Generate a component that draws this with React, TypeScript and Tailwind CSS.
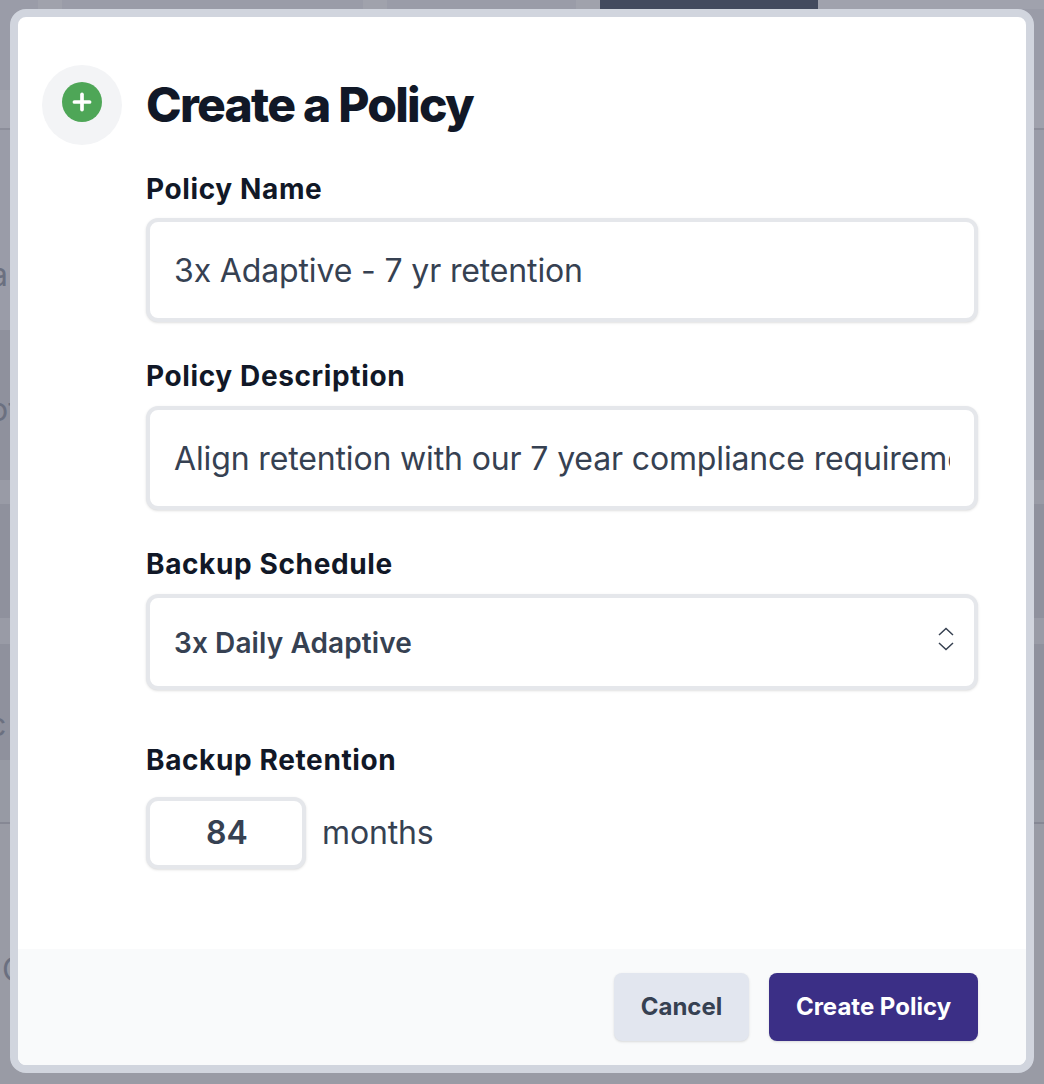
import { Plus } from 'lucide-react';

const inter = "font-['Inter',sans-serif] [font-optical-sizing:none]";

function Field({ label, children, className }: { label: string; children: React.ReactNode; className: string }) {
  return (
    <div className={className}>
      <div className="text-[28px] leading-[36px] font-bold tracking-[0.62px] text-[#111827]">{label}</div>
      {children}
    </div>
  );
}

const inputBox = 'flex items-center overflow-hidden rounded-xl border-4 border-[#e5e7eb] bg-white pt-[2px] shadow-sm';

function Chevrons() {
  return (
    <svg className="-mt-[8px]" width="16" height="24" viewBox="0 0 16 24" fill="none" stroke="#374151" strokeWidth="1.5">
      <path d="M1 8 L8 1.5 L15 8" />
      <path d="M1 16 L8 22.5 L15 16" />
    </svg>
  );
}

export default function App() {
  return (
    <div className={`relative h-[1084px] w-[1044px] overflow-hidden ${inter}`}>
      {/* dimmed page behind the modal */}
      <div className="flex h-full flex-col bg-[#9a9ca8] text-[32px] text-[#6b7080]">
        <div className="flex h-[90px] items-start bg-[#9a9ca8]">
          <div className="ml-[38px] h-[9px] w-[24px] bg-[#a0a2ac]" />
          <div className="ml-[301px] h-[9px] w-[24px] bg-[#a0a2ac]" />
          <div className="ml-[189px] h-[9px] w-[24px] bg-[#a0a2ac]" />
          <div className="h-[9px] w-[218px] bg-[#434a5e]" />
          <div className="h-[9px] flex-1 bg-[#a0a2ad]" />
        </div>
        <div className="h-[40px] border-b-2 border-[#8c8e9a] bg-[#9fa1ac]" />
        <div className="h-[200px] pt-[125px]">
          <span className="-ml-[10px] block leading-[40px]">a</span>
        </div>
        <div className="h-[150px] bg-[#8f919d] pt-[60px]">
          <span className="-ml-[11px] block leading-[40px]">ot</span>
        </div>
        <div className="h-[24px] bg-[#999ba6]" />
        <div className="h-[114px] bg-[#8f919d]" />
        <div className="h-[26px] bg-[#999ba6]" />
        <div className="h-[116px] bg-[#8f919d] pt-[61px]">
          <span className="-ml-[12px] block leading-[40px]">c</span>
        </div>
        <div className="h-[64px] border-b-2 border-[#868894] bg-[#979aa4]" />
        <div className="flex-1 bg-[#999ba5] pt-[126px]">
          <span className="ml-[2px] block leading-[40px]">C</span>
        </div>
      </div>

      {/* modal */}
      <div className="absolute top-[9px] left-[10px] flex h-[1064px] w-[1024px] flex-col rounded-2xl border-8 border-[#d1d5de] bg-white">
        <div className="flex flex-1">
          <div className="ml-[24px] mt-[48px] flex size-[80px] shrink-0 justify-center rounded-full bg-[#f3f4f6] pt-[17px]">
            <div className="flex size-[40px] items-center justify-center rounded-full bg-[#4ea657]">
              <Plus size={26} strokeWidth={3.4} color="#ffffff" />
            </div>
          </div>
          <div className="ml-[24px] w-[832px]">
            <h1 className="mt-[56px] text-[48px] leading-[64px] font-extrabold tracking-[-1.75px] text-[#111827]">Create a Policy</h1>
            <Field label="Policy Name" className="mt-[34px]">
              <div className={`${inputBox} mt-[11px] h-[104px] pl-[24px] pr-[24px] text-[32px] tracking-[-0.14px] text-[#364152]`}>
                <span className="whitespace-nowrap">3x Adaptive - 7 yr retention</span>
              </div>
            </Field>
            <Field label="Policy Description" className="mt-[36px]">
              <div className={`${inputBox} mt-[12px] h-[104px] pl-[24px] pr-[24px] text-[32px] tracking-[-0.14px] text-[#364152]`}>
                <span className="block w-full overflow-hidden whitespace-nowrap">Align retention with our 7 year compliance requirements</span>
              </div>
            </Field>
            <Field label="Backup Schedule" className="mt-[36px]">
              <div className={`${inputBox} mt-[12px] h-[96px] justify-between pl-[24px] pr-[20px] text-[28px] font-semibold tracking-[0.1px] text-[#364152]`}>
                <span>3x Daily Adaptive</span>
                <Chevrons />
              </div>
            </Field>
            <Field label="Backup Retention" className="mt-[52px]">
              <div className="mt-[19px] flex items-center">
                <div className="flex h-[72px] w-[160px] items-center justify-center rounded-xl border-4 border-[#e5e7eb] bg-white pl-[2px] text-[32px] font-semibold text-[#364152] shadow-sm">84</div>
                <span className="ml-[16px] text-[32px] tracking-[-0.14px] text-[#364152]">months</span>
              </div>
            </Field>
          </div>
        </div>
        <div className="flex h-[116px] items-start justify-end gap-[20px] rounded-b-lg bg-[#f9fafb] pt-[24px] pr-[48px]">
          <button className="h-[68px] w-[135px] rounded-lg bg-[#e2e6ef] text-[24px] font-bold text-[#364152] shadow-sm">Cancel</button>
          <button className="h-[68px] w-[209px] rounded-lg bg-[#3b2f86] text-[24px] font-bold text-white shadow-sm">Create Policy</button>
        </div>
      </div>
    </div>
  );
}
